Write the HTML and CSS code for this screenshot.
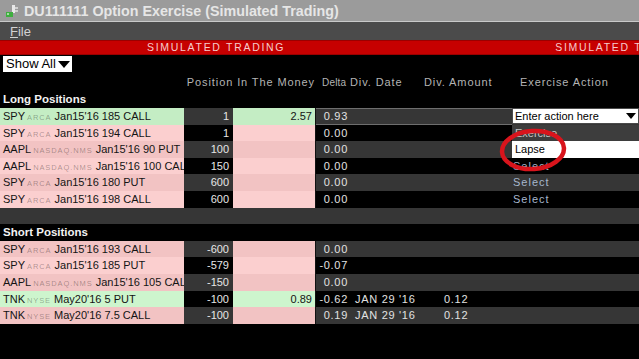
FILE: index.html
```html
<!DOCTYPE html>
<html lang="en">

<head>
    <meta charset="UTF-8">
    <meta name="viewport" content="width=device-width, initial-scale=1.0">
    <title>DU111111 Option Exercise (Simulated Trading)</title>
    <link rel="stylesheet" href="styles.css">
</head>

<body>
    <div class="window">

        <!-- Barra de titulo -->
        <div class="titlebar">
            <svg class="app-icon" width="14" height="14" viewBox="0 0 14 14">
                <rect x="7" y="1" width="3" height="8" fill="#e8e8e8" />
                <rect x="10" y="3" width="3" height="2" fill="#d0d0d0" />
                <rect x="10" y="6" width="3" height="2" fill="#d0d0d0" />
                <rect x="1" y="8" width="7" height="5" fill="#3fae3f" />
                <rect x="2" y="9" width="2" height="2" fill="#9fe09f" />
            </svg>
            <span>DU111111 Option Exercise (Simulated Trading)</span>
        </div>

        <div class="menubar">
            <span class="menu-item"><u>F</u>ile</span>
        </div>

        <div class="simbar">
            <span>SIMULATED TRADING</span>
            <span>SIMULATED TRADING</span>
        </div>

        <div class="content">
            <div class="toolbar">
                <div class="select-box">Show All <span class="caret"></span></div>
            </div>

            <div class="grid-head">
                <div></div>
                <div class="h-money">Position In The Money</div>
                <div class="h-delta">Delta</div>
                <div class="h-date">Div. Date</div>
                <div class="h-amount">Div. Amount</div>
                <div class="h-action">Exercise Action</div>
            </div>

            <div class="rows">
                <div class="section">Long Positions</div>

                <div class="row sel">
                    <div class="name green">SPY<span class="exch">ARCA</span> Jan15'16 185 CALL</div>
                    <div class="pos">1</div>
                    <div class="itm green">2.57</div>
                    <div class="delta">0.93</div>
                    <div class="date"></div>
                    <div class="amount"></div>
                    <div class="action">
                        <div class="combo">Enter action here <span class="caret"></span></div>
                        <div class="dropdown">
                            <div class="opt">Exercise</div>
                            <div class="opt hover">Lapse</div>
                            <svg class="mark" width="76" height="48" viewBox="0 0 76 48">
                                <ellipse cx="38" cy="24" rx="31" ry="19" fill="none" stroke="#d8141c" stroke-width="4.5" transform="rotate(-4 38 24)" />
                            </svg>
                        </div>
                    </div>
                </div>
                <div class="row">
                    <div class="name pink">SPY<span class="exch">ARCA</span> Jan15'16 194 CALL</div>
                    <div class="pos">1</div>
                    <div class="itm pink"></div>
                    <div class="delta">0.00</div>
                    <div class="date"></div>
                    <div class="amount"></div>
                    <div class="action select">Select</div>
                </div>
                <div class="row">
                    <div class="name pink">AAPL<span class="exch">NASDAQ.NMS</span> Jan15'16 90 PUT</div>
                    <div class="pos">100</div>
                    <div class="itm pink"></div>
                    <div class="delta">0.00</div>
                    <div class="date"></div>
                    <div class="amount"></div>
                    <div class="action select">Select</div>
                </div>
                <div class="row">
                    <div class="name pink">AAPL<span class="exch">NASDAQ.NMS</span> Jan15'16 100 CALL</div>
                    <div class="pos">150</div>
                    <div class="itm pink"></div>
                    <div class="delta">0.00</div>
                    <div class="date"></div>
                    <div class="amount"></div>
                    <div class="action select">Select</div>
                </div>
                <div class="row">
                    <div class="name pink">SPY<span class="exch">ARCA</span> Jan15'16 180 PUT</div>
                    <div class="pos">600</div>
                    <div class="itm pink"></div>
                    <div class="delta">0.00</div>
                    <div class="date"></div>
                    <div class="amount"></div>
                    <div class="action select">Select</div>
                </div>
                <div class="row">
                    <div class="name pink">SPY<span class="exch">ARCA</span> Jan15'16 198 CALL</div>
                    <div class="pos">600</div>
                    <div class="itm pink"></div>
                    <div class="delta">0.00</div>
                    <div class="date"></div>
                    <div class="amount"></div>
                    <div class="action select">Select</div>
                </div>

                <div class="row empty"></div>

                <div class="section">Short Positions</div>

                <div class="row">
                    <div class="name pink">SPY<span class="exch">ARCA</span> Jan15'16 193 CALL</div>
                    <div class="pos">-600</div>
                    <div class="itm pink"></div>
                    <div class="delta">0.00</div>
                    <div class="date"></div>
                    <div class="amount"></div>
                    <div class="action"></div>
                </div>
                <div class="row">
                    <div class="name pink">SPY<span class="exch">ARCA</span> Jan15'16 185 PUT</div>
                    <div class="pos">-579</div>
                    <div class="itm pink"></div>
                    <div class="delta">-0.07</div>
                    <div class="date"></div>
                    <div class="amount"></div>
                    <div class="action"></div>
                </div>
                <div class="row">
                    <div class="name pink">AAPL<span class="exch">NASDAQ.NMS</span> Jan15'16 105 CALL</div>
                    <div class="pos">-150</div>
                    <div class="itm pink"></div>
                    <div class="delta">0.00</div>
                    <div class="date"></div>
                    <div class="amount"></div>
                    <div class="action"></div>
                </div>
                <div class="row">
                    <div class="name green">TNK<span class="exch">NYSE</span> May20'16 5 PUT</div>
                    <div class="pos">-100</div>
                    <div class="itm green">0.89</div>
                    <div class="delta">-0.62</div>
                    <div class="date">JAN 29 '16</div>
                    <div class="amount">0.12</div>
                    <div class="action"></div>
                </div>
                <div class="row">
                    <div class="name pink">TNK<span class="exch">NYSE</span> May20'16 7.5 CALL</div>
                    <div class="pos">-100</div>
                    <div class="itm pink"></div>
                    <div class="delta">0.19</div>
                    <div class="date">JAN 29 '16</div>
                    <div class="amount">0.12</div>
                    <div class="action"></div>
                </div>
            </div>
        </div>
    </div>
</body>

</html>
```

FILE: styles.css
```css
body {
    margin: 0;
    padding: 0;
    background-color: #000;
    font-family: 'Liberation Sans', Arial, sans-serif;
    font-size: 11px;
    overflow: hidden;
}

.window {
    width: 639px;
    height: 359px;
    overflow: hidden;
}

/* Barra de titulo y menu */
.titlebar {
    height: 21px;
    background-color: #9b9b9b;
    border-bottom: 1px solid #c9c9c9;
    display: flex;
    align-items: center;
    gap: 5px;
    padding-left: 5px;
    color: #e6e6e6;
    font-size: 14.3px;
    font-weight: bold;
    white-space: nowrap;
}

.menubar {
    height: 16px;
    padding: 2px 0 0 10px;
    background-color: #4b4b4b;
    color: #d2d2d2;
    font-size: 13px;
    line-height: 16px;
}

.simbar {
    height: 15px;
    background-color: #c60000;
    box-shadow: inset 0 1px 0 #9a0000, inset 0 -1px 0 #9a0000;
    display: flex;
    gap: 270px;
    padding-left: 147px;
    color: #f6cccc;
    font-size: 10.5px;
    letter-spacing: 1.7px;
    line-height: 15px;
    white-space: nowrap;
}

/* Contenido */
.toolbar {
    height: 17px;
    padding: 1px 0 0 3px;
}

.select-box {
    width: 66px;
    height: 16px;
    padding-left: 3px;
    background-color: #fff;
    color: #000;
    font-size: 13px;
    line-height: 16px;
    display: flex;
    align-items: center;
    justify-content: space-between;
}

.caret {
    width: 0;
    height: 0;
    margin-right: 2px;
    border-left: 6px solid transparent;
    border-right: 6px solid transparent;
    border-top: 7px solid #000;
}

.grid-head,
.row {
    display: grid;
    grid-template-columns: 184px 49px 82px 35px 70px 92px 1fr;
}

.grid-head {
    height: 18.4px;
    line-height: 19px;
    color: #b4b4b4;
    letter-spacing: 0.9px;
    white-space: nowrap;
}

.h-money {
    grid-column: 2 / 4;
    text-align: right;
}

.h-delta {
    padding-left: 7px;
    font-size: 10px;
    letter-spacing: 0.2px;
}

.h-date {
    padding-left: 0;
}

.h-amount {
    padding-left: 4px;
}

.h-action {
    padding-left: 8px;
}

.rows > :nth-child(even) {
    background-color: #363636;
}

.section {
    height: 16.6px;
    padding-left: 3px;
    color: #f2f2f2;
    font-size: 11.5px;
    font-weight: bold;
    line-height: 16.6px;
}

.row {
    height: 16.6px;
    line-height: 16.6px;
    white-space: nowrap;
}

.name {
    padding-left: 3px;
    overflow: hidden;
    color: #141414;
}

.exch {
    margin-left: 2px;
    font-size: 7.5px;
    letter-spacing: 0.9px;
    color: rgba(0, 0, 0, 0.33);
}

.pink {
    background-color: #fbcfcf;
}

.green {
    background-color: #cdf5cd;
}

.rows > :nth-child(even) .pink {
    background-color: #f2c3c3;
}

.rows > :nth-child(even) .green {
    background-color: #c4edc4;
}

.pos {
    padding-right: 4px;
    text-align: right;
    color: #e6e6e6;
}

.itm {
    padding-right: 3px;
    text-align: right;
    color: #141414;
}

.delta,
.date,
.amount {
    color: #e2e2e2;
    letter-spacing: 0.7px;
}

.delta {
    padding-right: 2px;
    text-align: right;
    border-left: 1px solid #111;
}

.date {
    padding-left: 5px;
}

.amount {
    padding-left: 24px;
}

.sel .delta,
.sel .date,
.sel .amount {
    box-shadow: inset 0 1px 0 #6e6e6e, inset 0 -1px 0 #6e6e6e;
}

.action {
    position: relative;
    padding-left: 1px;
}

.select {
    color: #a6b6cc;
    letter-spacing: 1px;
}

.combo {
    height: 16px;
    box-sizing: border-box;
    margin-left: -1px;
    padding-left: 2px;
    background-color: #fff;
    border: 1px solid #4a4a4a;
    color: #000;
    line-height: 14px;
    display: flex;
    align-items: center;
    justify-content: space-between;
}

.combo .caret {
    border-left-width: 5px;
    border-right-width: 5px;
    border-top-width: 6px;
    margin-right: 2px;
}

/* Lista desplegable abierta */
.dropdown {
    position: absolute;
    top: 100%;
    left: 0;
    right: 0;
    z-index: 2;
}

.opt {
    height: 16.6px;
    padding-left: 3px;
    background-color: #3d3d3d;
    color: #c8c8c8;
    line-height: 16.6px;
}

.opt.hover {
    background-color: #fff;
    color: #000;
}

.mark {
    position: absolute;
    left: -17px;
    top: 1px;
}
```
